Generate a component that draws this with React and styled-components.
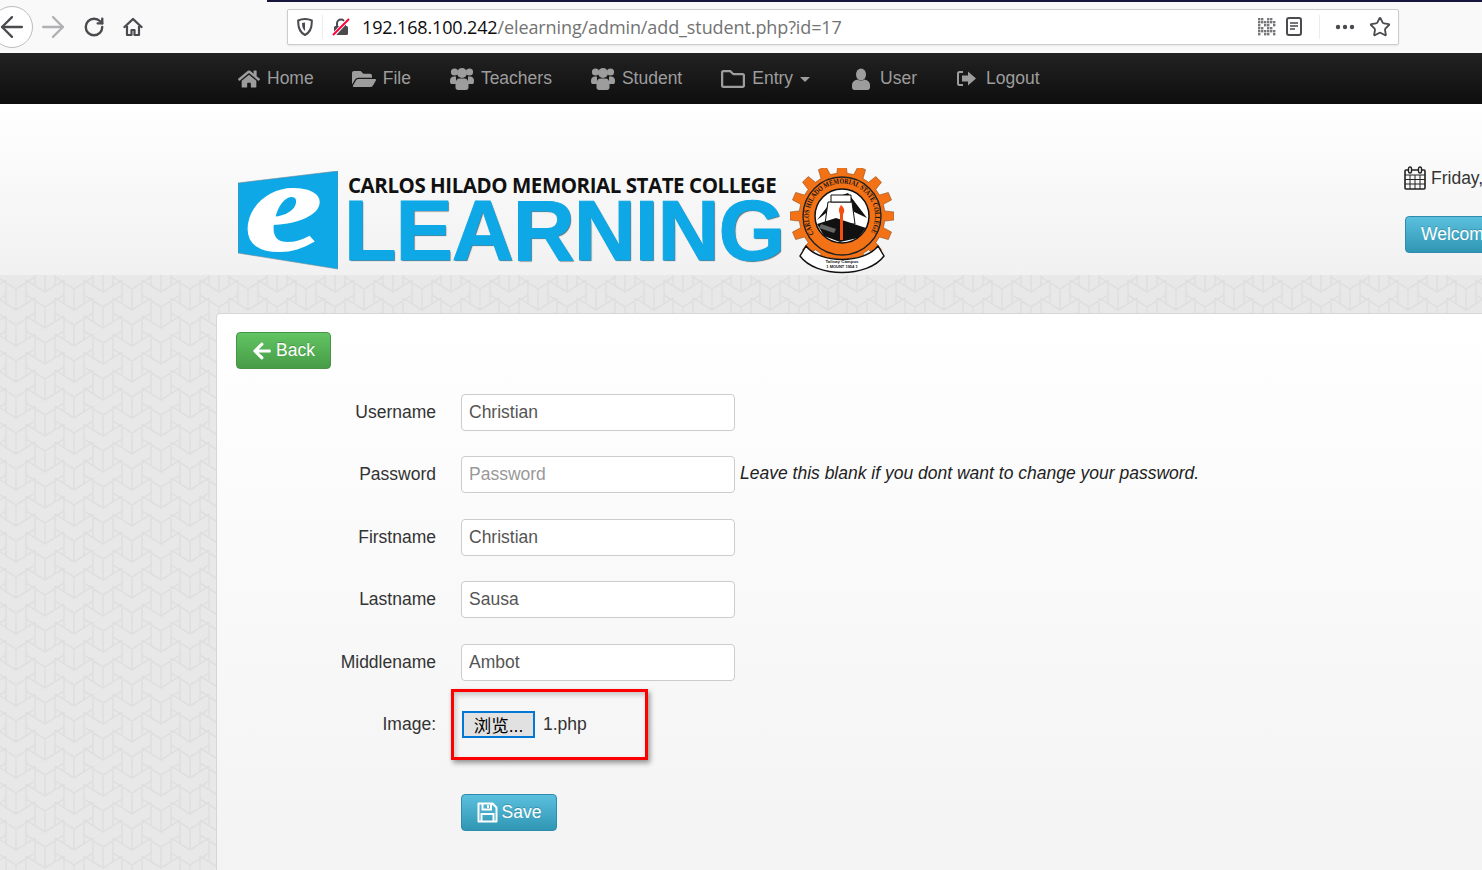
import React from 'react';
import styled, { createGlobalStyle } from 'styled-components';
import { FaHome, FaFolderOpen, FaRegFolder, FaArrowLeft } from 'react-icons/fa';
import { ArrowLeft, ArrowRight, RotateCw, Star } from 'lucide-react';

const Global = createGlobalStyle`
  html, body { margin: 0; padding: 0; height: 100%; overflow: hidden; }
  body { font-family: "Liberation Sans", Arial, sans-serif; font-size: 17.5px; color: #333; }
  * { box-sizing: border-box; }
`;

// background tile: interlocking Y shapes, outline plus centre crease
const tile = () => {
  let d = '';
  [[45, 32], [16, 14]].forEach(([ax, ay]) => {
    [-58, 0, 58].forEach(ox => {
      [-36, 0, 36].forEach(oy => {
        const x = ax + ox;
        const y = ay + oy;
        d += `M${x - 19} ${y - 12}L${x} ${y}L${x + 19} ${y - 12}M${x} ${y}V${y + 21}`;
        d += `M${x - 19} ${y - 27}L${x} ${y - 15}L${x + 19} ${y - 27}`;
        d += `M${x - 10} ${y - 9}V${y + 14.5}M${x + 10} ${y - 9}V${y + 14.5}`;
      });
    });
  });
  const svg = `<svg xmlns="http://www.w3.org/2000/svg" width="58" height="36"><path d="${d}" fill="none" stroke="#dfdfdf" stroke-width="1.5"/></svg>`;
  return `url("data:image/svg+xml,${encodeURIComponent(svg)}")`;
};

const Page = styled.div`
  display: flex;
  flex-direction: column;
  width: 1482px;
  height: 870px;
  overflow: hidden;
`;

const Toolbar = styled.div`
  position: relative;
  display: flex;
  align-items: center;
  height: 53px;
  flex: none;
  background: #f9f9fa;
`;

const TopLine = styled.div`
  position: absolute;
  top: 0;
  left: 267px;
  right: 0;
  height: 2px;
  background: #16163a;
`;

const BackCircle = styled.div`
  display: flex;
  align-items: center;
  justify-content: center;
  width: 42px;
  height: 42px;
  margin-left: -9px;
  margin-top: 1px;
  border: 1px solid #bdbdbd;
  border-radius: 50%;
  background: #fff;
  color: #4a4a4f;
  svg { flex: none; }
`;

const ToolButton = styled.div`
  display: flex;
  align-items: center;
  justify-content: center;
  width: 24px;
  height: 24px;
  margin-left: ${p => p.$left}px;
  color: ${p => p.$dim ? '#b1b1b3' : '#4a4a4f'};
  svg { flex: none; }
`;

const UrlBar = styled.div`
  display: flex;
  align-items: center;
  width: 1112px;
  height: 36px;
  margin-left: 142px;
  padding: 0 7px 0 9px;
  background: #fff;
  border: 1px solid #ccc;
  border-radius: 2px;
  box-shadow: 0 1px 2px rgba(0,0,0,.08);
`;

const UrlDivider = styled.div`
  width: 1px;
  height: 24px;
  margin: 0 ${p => p.$right}px 0 ${p => p.$left}px;
  background: #ececec;
`;

const UrlText = styled.div`
  flex: 1;
  margin-left: 12px;
  font-family: "Open Sans", "Noto Sans", sans-serif;
  font-size: 18px;
  letter-spacing: -0.1px;
  color: #737373;
  white-space: nowrap;
`;

const UrlHost = styled.span`
  color: #0c0c0d;
  letter-spacing: -0.15px;
`;

const UrlIcon = styled.div`
  display: flex;
  align-items: center;
  margin-left: ${p => p.$left || 0}px;
  color: #4a4a4f;
`;

const Navbar = styled.nav`
  display: flex;
  align-items: center;
  gap: 39px;
  height: 51px;
  flex: none;
  padding-left: 238px;
  background: linear-gradient(#222, #0e0e0e);
  box-shadow: 0 1px 2px rgba(0,0,0,.25);
`;

const NavLink = styled.a`
  display: flex;
  align-items: center;
  gap: 7px;
  color: #9d9d9d;
  font-size: 17.5px;
  svg { display: block; flex: none; }
  &:first-child { margin-right: -1px; }
`;

const Caret = styled.span`
  width: 0;
  height: 0;
  margin: 2px 3px 0 0;
  border-left: 5px solid transparent;
  border-right: 5px solid transparent;
  border-top: 5px solid #9d9d9d;
`;

const Header = styled.header`
  display: flex;
  align-items: flex-start;
  height: 171px;
  flex: none;
  padding: 64px 0 0 238px;
  background: linear-gradient(#fff, #f1f1f1);
`;

const Logo = styled.div`
  display: flex;
  align-items: flex-start;
  width: 655px;
  flex: none;
`;

const LogoWords = styled.div`
  display: flex;
  flex-direction: column;
  width: 442px;
  flex: none;
  margin-left: 10px;
  padding-top: 4px;
`;

const College = styled.div`
  font-family: "Open Sans", sans-serif;
  font-weight: 700;
  font-size: 20.5px;
  line-height: 26px;
  color: #111;
  white-space: nowrap;
  letter-spacing: -0.45px;
`;

const Learning = styled.div`
  font-weight: 700;
  font-size: 86px;
  line-height: 64px;
  margin-left: -4px;
  letter-spacing: -1.1px;
  color: #0ea8e6;
  -webkit-text-stroke: 1px #0ea8e6;
  text-shadow: 1px 1px 1px #666;
  white-space: nowrap;
`;

const HeaderRight = styled.div`
  display: flex;
  flex-direction: column;
  align-items: flex-start;
  flex: none;
  width: 300px;
  margin-left: 511px;
  margin-top: -2px;
`;

const DateLine = styled.div`
  display: flex;
  align-items: center;
  gap: 5px;
  white-space: nowrap;
`;

const InfoButton = styled.div`
  display: inline-block;
  margin: 26px 0 0 1px;
  padding: 0 15px;
  height: 37px;
  line-height: 35px;
  color: #fff;
  background: linear-gradient(#5bc0de, #2f96b4);
  border: 1px solid #2f8bab;
  border-radius: 4px;
  text-shadow: 0 -1px 0 rgba(0,0,0,.2);
  white-space: nowrap;
`;

const Main = styled.main`
  flex: 1;
  padding: 38px 0 0 216px;
  background-color: #e8e8e8;
  background-image: ${tile()};
`;

const Card = styled.section`
  width: 1400px;
  height: 640px;
  padding: 18px 19px 0;
  background: linear-gradient(#fff, #f3f3f3 88%);
  border: 1px solid #d6d6d6;
  border-radius: 4px 0 0 0;
`;

const Button = styled.button`
  display: inline-flex;
  align-items: center;
  justify-content: center;
  gap: ${p => p.$gap}px;
  width: ${p => p.$width}px;
  height: 37px;
  padding: 0;
  color: #fff;
  font-family: inherit;
  font-size: 17.5px;
  border-radius: 4px;
  border: 1px solid ${p => p.$green ? '#479447' : '#2f8bab'};
  background: ${p => p.$green ? 'linear-gradient(#62c462, #479c47)' : 'linear-gradient(#5bc0de, #2f96b4)'};
  text-shadow: 0 -1px 0 rgba(0,0,0,.2);
`;

const Form = styled.form`
  display: flex;
  flex-direction: column;
  gap: 25.5px;
  margin-top: 24.75px;
`;

const Row = styled.div`
  display: grid;
  grid-template-columns: 200px 274px auto;
  column-gap: 25px;
  align-items: center;
  height: 37px;
`;

const Label = styled.label`
  text-align: right;
  color: #333;
`;

const Input = styled.input`
  width: 274px;
  height: 37px;
  padding: 0 7px;
  font-family: inherit;
  font-size: 17.5px;
  color: #555;
  background: #fff;
  border: 1px solid #ccc;
  border-radius: 4px;
  &::placeholder { color: #999; opacity: 1; }
`;

const Hint = styled.em`
  margin-left: -20px;
  margin-top: -2px;
  color: #222;
  white-space: nowrap;
`;

const FileField = styled.div`
  position: relative;
  display: flex;
  align-items: center;
  gap: 8px;
  padding-left: 1px;
`;

const FileButton = styled.span`
  display: flex;
  align-items: center;
  justify-content: center;
  width: 73px;
  height: 27px;
  font-family: "Liberation Sans", "Noto Sans CJK SC", sans-serif;
  font-size: 17.5px;
  color: #000;
  background: #e1e1e1;
  border: 2px solid #0078d7;
`;

const RedBox = styled.div`
  position: absolute;
  left: -10px;
  top: -22px;
  width: 197px;
  height: 71px;
  border: 3px solid #f00;
  box-shadow: 2px 3px 5px rgba(0,0,0,.4), inset 2px 3px 5px rgba(0,0,0,.2);
  pointer-events: none;
`;

const SaveRow = styled.div`
  margin: 50.5px 0 0 225px;
`;

const gearPath = (cx, cy, outer, inner, teeth) => {
  let d = '';
  for (let i = 0; i < teeth; i++) {
    const step = (Math.PI * 2) / teeth;
    const a = i * step;
    const pts = [
      [inner, a - step * 0.3],
      [outer, a - step * 0.2],
      [outer, a + step * 0.2],
      [inner, a + step * 0.3],
    ];
    pts.forEach(([r, t], j) => {
      const x = (cx + r * Math.cos(t)).toFixed(1);
      const y = (cy + r * Math.sin(t)).toFixed(1);
      d += `${i === 0 && j === 0 ? 'M' : 'L'}${x} ${y}`;
    });
  }
  return d + 'Z';
};

const LogoMark = () => (
  <svg width="100" height="99" viewBox="0 0 100 99" style={{ flex: 'none', marginTop: 3 }}>
    <polygon points="0,12 100,0 100,98 0,82" fill="#0ea8e6" stroke="#6b8a99" strokeWidth="0.6" />
    <text transform="translate(7,79) scale(1.4,1.05)" fontFamily="Liberation Serif" fontStyle="italic" fontWeight="700" fontSize="124" fill="#fff" stroke="#fff" strokeWidth="2">e</text>
  </svg>
);

const Seal = () => (
  <svg width="104" height="106" viewBox="0 0 104 106" style={{ flex: 'none' }}>
    <path d={gearPath(52, 48, 52, 43, 16)} fill="#f47216" stroke="#7a3a08" strokeWidth="0.5" />
    <circle cx="52" cy="48" r="39" fill="#f47216" stroke="#222" strokeWidth="1.4" />
    <circle cx="52" cy="48" r="27" fill="#fff" stroke="#111" strokeWidth="1.5" />
    <path id="sealArc" d="M24 66A33 33 0 1 1 80 66" fill="none" />
    <text fontFamily="Liberation Serif" fontWeight="700" fontSize="7.4" fill="#111">
      <textPath href="#sealArc" textLength="138" lengthAdjust="spacingAndGlyphs">CARLOS HILADO MEMORIAL STATE COLLEGE</textPath>
    </text>
    <path d="M27 52L44 30L58 25L77 50L60 42H40Z" fill="#111" />
    <path d="M38 34H62L65 56H35Z" fill="#fff" stroke="#111" strokeWidth="1" />
    <path d="M41 27H61V34H41Z" fill="#fff" stroke="#111" strokeWidth="1" />
    <path d="M27 56L46 50L76 60L68 70L50 74L34 68Z" fill="#111" />
    <path d="M31 56L46 61L44 65L29 60Z" fill="#666" />
    <path d="M51 37C48 41 49 44 50 46L50 72H53L53 46C55 44 55 40 51 37Z" fill="#f44f12" />
    <path d="M16 78C30 96 74 96 88 78L94 88C78 110 26 110 10 88Z" fill="#fff" stroke="#111" strokeWidth="1.4" />
    <text x="52" y="95" textAnchor="middle" fontFamily="Liberation Sans" fontSize="4.4" fontWeight="700" fill="#111">Talisay Campus</text>
    <text x="52" y="100" textAnchor="middle" fontFamily="Liberation Sans" fontSize="4" fontWeight="700" fill="#111">1 MOUNT 1954 1</text>
  </svg>
);

const ShieldIcon = () => (
  <svg width="16" height="18" viewBox="0 0 16 18" fill="none">
    <path d="M8 1C5.5 1 3 1.6 1.2 2.5C1 8 2 14 8 17C14 14 15 8 14.8 2.5C13 1.6 10.5 1 8 1Z" stroke="#4a4a4f" strokeWidth="2" />
    <path d="M8 4.5C7 4.5 6 4.7 5 5C5 8 5.5 11 8 13Z" fill="#4a4a4f" />
  </svg>
);

const LockOffIcon = () => (
  <svg width="18" height="18" viewBox="0 0 18 18" fill="none">
    <path d="M5 8V5.5a4 4 0 0 1 8 0V8" stroke="#4a4a4f" strokeWidth="2" />
    <rect x="2" y="8" width="14" height="9" rx="1.5" fill="#4a4a4f" />
    <path d="M1 17.5L17 0.5" stroke="#fff" strokeWidth="4" />
    <path d="M1 17L17 1" stroke="#ff0039" strokeWidth="2" />
  </svg>
);

const QrIcon = () => {
  const cells = [];
  for (let r = 0; r < 6; r++) {
    for (let c = 0; c < 6; c++) {
      if ((r * 3 + c * 5 + r * c) % 3 !== 1) cells.push(<rect key={`${r}-${c}`} x={c * 3} y={r * 3} width="2.4" height="2.4" fill="#77777a" />);
    }
  }
  return <svg width="18" height="18" viewBox="0 0 18 18">{cells}</svg>;
};

const ReaderIcon = () => (
  <svg width="16" height="19" viewBox="0 0 16 19" fill="none">
    <rect x="1" y="1" width="14" height="17" rx="2" stroke="#4a4a4f" strokeWidth="2" />
    <path d="M4 6H12M4 9H12M4 12H9" stroke="#4a4a4f" strokeWidth="1.4" />
  </svg>
);

const DotsIcon = () => (
  <svg width="20" height="6" viewBox="0 0 20 6" fill="#4a4a4f">
    <circle cx="3" cy="3" r="2.2" /><circle cx="10" cy="3" r="2.2" /><circle cx="17" cy="3" r="2.2" />
  </svg>
);

const HomeToolIcon = () => (
  <svg width="20" height="20" viewBox="0 0 20 20" fill="none">
    <path d="M1.5 10L10 2L18.5 10" stroke="#4a4a4f" strokeWidth="2.4" strokeLinecap="round" strokeLinejoin="round" />
    <path d="M4 9V18H8.5V13H11.5V18H16V9" stroke="#4a4a4f" strokeWidth="2.2" strokeLinejoin="round" />
  </svg>
);

const GroupIcon = () => (
  <svg width="24" height="23" viewBox="0 0 24 23" fill="#9d9d9d">
    <circle cx="4.5" cy="5" r="3.6" />
    <circle cx="19.5" cy="5" r="3.6" />
    <path d="M0 14C0 11 1.5 9.5 4 9.5H6V17H1.5C.5 17 0 16 0 14Z" />
    <path d="M24 14C24 11 22.5 9.5 20 9.5H18V17H22.5C23.5 17 24 16 24 14Z" />
    <circle cx="12" cy="6" r="5" />
    <path d="M5.5 17C5.5 13.5 7 11.5 9.5 11.5H14.5C17 11.5 18.5 13.5 18.5 17V20.5C18.5 22 17.5 23 16 23H8C6.5 23 5.5 22 5.5 20.5Z" />
  </svg>
);

const BustIcon = () => (
  <svg width="21" height="22" viewBox="0 0 21 22" fill="#9d9d9d">
    <ellipse cx="9" cy="6.5" rx="5" ry="6" />
    <path d="M0 17C0 14 2 12.5 5.5 11.5C7 13 11 13 12.5 11.5C16 12.5 18 14 18 17V19.5C18 21 17 22 15.5 22H2.5C1 22 0 21 0 19.500Z" />
  </svg>
);

const LogoutIcon = () => (
  <svg width="23" height="17" viewBox="0 0 23 17" fill="#9d9d9d">
    <path d="M7 1H3.5A2.5 2.5 0 0 0 1 3.5V13.5A2.5 2.5 0 0 0 3.5 16H7V14H3.5A.5.5 0 0 1 3 13.5V3.5A.5.5 0 0 1 3.5 3H7Z" />
    <path d="M12 1.5L20 8.5L12 15.5V11.5H6V5.5H12Z" />
  </svg>
);

const CalendarIcon = () => (
  <svg width="22" height="24" viewBox="0 0 22 24" fill="none" stroke="#222">
    <rect x="1" y="4" width="20" height="19" rx="1" strokeWidth="1.6" />
    <path d="M1 9H21M1 13.5H21M1 18H21M6 9V23M11 9V23M16 9V23" strokeWidth="1" />
    <rect x="4.5" y="1" width="3" height="6" rx="1.5" fill="#fff" strokeWidth="1.4" />
    <rect x="14.5" y="1" width="3" height="6" rx="1.5" fill="#fff" strokeWidth="1.4" />
  </svg>
);

const SaveIcon = () => (
  <svg width="21" height="21" viewBox="0 0 21 21" fill="none" stroke="#fff" strokeWidth="2">
    <path d="M1.5 1.5H15.5L19.5 5.5V19.5H1.5Z" strokeLinejoin="round" />
    <path d="M5.5 1.5V7.5H14V1.5" />
    <path d="M4.5 19.5V12H16.5V19.5" />
    <path d="M11 3V6" />
  </svg>
);

const navItems = [
  { label: 'Home', icon: <FaHome size={22} /> },
  { label: 'File', icon: <FaFolderOpen size={24} /> },
  { label: 'Teachers', icon: <GroupIcon /> },
  { label: 'Student', icon: <GroupIcon /> },
  { label: 'Entry', icon: <FaRegFolder size={24} />, caret: true },
  { label: 'User', icon: <BustIcon /> },
  { label: 'Logout', icon: <LogoutIcon /> },
];

const fields = [
  { label: 'Username', value: 'Christian' },
  { label: 'Password', placeholder: 'Password', hint: 'Leave this blank if you dont want to change your password.' },
  { label: 'Firstname', value: 'Christian' },
  { label: 'Lastname', value: 'Sausa' },
  { label: 'Middlename', value: 'Ambot' },
];

export default function App() {
  return (
    <Page>
      <Global />
      <Toolbar>
        <TopLine />
        <BackCircle><ArrowLeft size={34} strokeWidth={1.6} /></BackCircle>
        <ToolButton $left={8} $dim><ArrowRight size={34} strokeWidth={1.6} /></ToolButton>
        <ToolButton $left={17}><RotateCw size={22} strokeWidth={2.6} /></ToolButton>
        <ToolButton $left={15}><HomeToolIcon /></ToolButton>
        <UrlBar>
          <UrlIcon><ShieldIcon /></UrlIcon>
          <UrlDivider $left={9} $right={9} />
          <UrlIcon><LockOffIcon /></UrlIcon>
          <UrlText><UrlHost>192.168.100.242</UrlHost>/elearning/admin/add_student.php?id=17</UrlText>
          <UrlIcon><QrIcon /></UrlIcon>
          <UrlIcon $left={10}><ReaderIcon /></UrlIcon>
          <UrlDivider $left={17} $right={15} />
          <UrlIcon><DotsIcon /></UrlIcon>
          <UrlIcon $left={14}><Star size={22} strokeWidth={2} /></UrlIcon>
        </UrlBar>
      </Toolbar>
      <Navbar>
        {navItems.map(item => (
          <NavLink key={item.label}>
            {item.icon}
            {item.label}
            {item.caret && <Caret />}
          </NavLink>
        ))}
      </Navbar>
      <Header>
        <Logo>
          <LogoMark />
          <LogoWords>
            <College>CARLOS HILADO MEMORIAL STATE COLLEGE</College>
            <Learning>LEARNING</Learning>
          </LogoWords>
          <Seal />
        </Logo>
        <HeaderRight>
          <DateLine><CalendarIcon />Friday,</DateLine>
          <InfoButton>Welcome</InfoButton>
        </HeaderRight>
      </Header>
      <Main>
        <Card>
          <Button type="button" $green $width={95} $gap={4}><FaArrowLeft size={20} />Back</Button>
          <Form>
            {fields.map(f => (
              <Row key={f.label}>
                <Label>{f.label}</Label>
                {f.value
                  ? <Input defaultValue={f.value} />
                  : <Input placeholder={f.placeholder} />}
                {f.hint && <Hint>{f.hint}</Hint>}
              </Row>
            ))}
            <Row>
              <Label>Image:</Label>
              <FileField>
                <FileButton>浏览...</FileButton>
                1.php
                <RedBox />
              </FileField>
            </Row>
          </Form>
          <SaveRow>
            <Button type="button" $width={96} $gap={4}><SaveIcon />Save</Button>
          </SaveRow>
        </Card>
      </Main>
    </Page>
  );
}
